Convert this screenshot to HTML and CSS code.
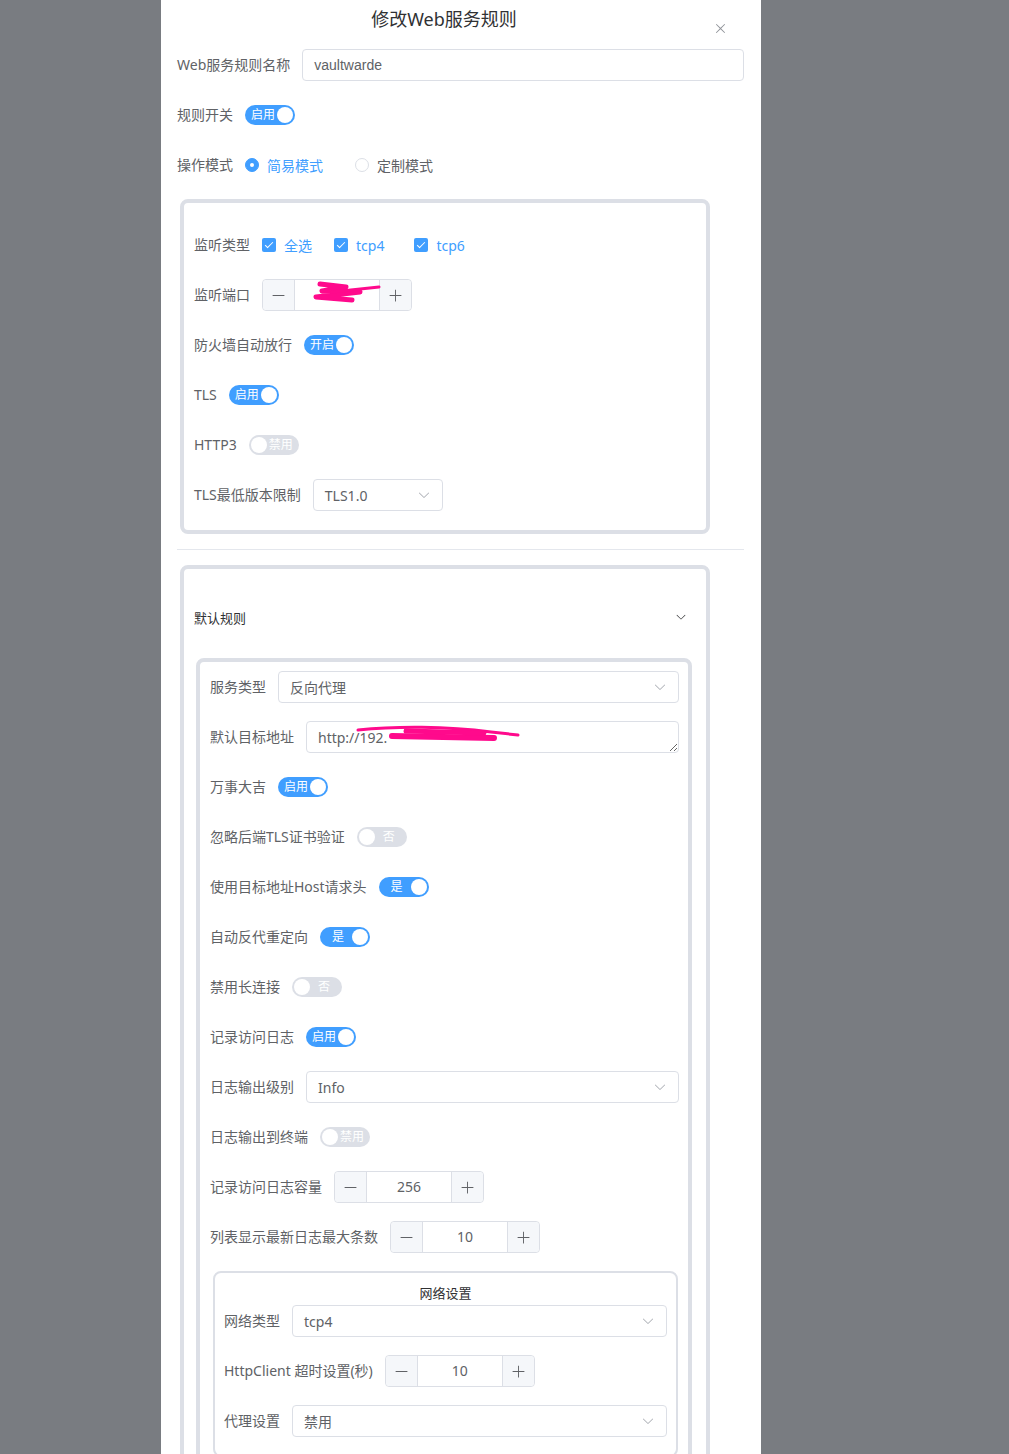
FILE: index.html
```html
<!DOCTYPE html>
<html lang="zh-CN">
<head>
<meta charset="utf-8">
<title>修改Web服务规则</title>
<link rel="stylesheet" href="styles.css">
</head>
<body>
<div class="dialog">
  <div class="dlg-header">
    <span class="dlg-title">修改Web服务规则</span>
    <span class="dlg-close"><svg viewBox="0 0 1024 1024" width="15" height="15"><path fill="currentColor" d="M764.288 214.592 512 466.88 259.712 214.592a31.936 31.936 0 0 0-45.12 45.12L466.752 512 214.528 764.224a31.936 31.936 0 1 0 45.12 45.184L512 557.184l252.288 252.288a31.936 31.936 0 0 0 45.12-45.12L557.12 512.064l252.288-252.352a31.936 31.936 0 1 0-45.12-45.184z"/></svg></span>
  </div>
  <div class="dlg-body">
    <div class="item">
      <span class="lbl">Web服务规则名称</span>
      <div class="ctl"><div class="input"><span class="input-text">vaultwarde</span></div></div>
    </div>
    <div class="item">
      <span class="lbl">规则开关</span>
      <div class="ctl"><span class="sw on"><span class="sw-text">启用</span><span class="sw-dot"></span></span></div>
    </div>
    <div class="item">
      <span class="lbl">操作模式</span>
      <div class="ctl">
        <span class="radio checked"><span class="radio-dot"></span><span class="radio-lbl">简易模式</span></span>
        <span class="radio"><span class="radio-dot"></span><span class="radio-lbl">定制模式</span></span>
      </div>
    </div>

    <div class="group">
      <div class="item">
        <span class="lbl">监听类型</span>
        <div class="ctl">
          <span class="cb cb-first"><span class="cb-box"></span><span class="cb-lbl">全选</span></span>
          <span class="cb"><span class="cb-box"></span><span class="cb-lbl">tcp4</span></span>
          <span class="cb"><span class="cb-box"></span><span class="cb-lbl">tcp6</span></span>
        </div>
      </div>
      <div class="item">
        <span class="lbl">监听端口</span>
        <div class="ctl">
          <div class="num">
            <span class="num-btn dec"><svg viewBox="0 0 1024 1024" width="15" height="15"><path fill="currentColor" d="M128 544h768a32 32 0 1 0 0-64H128a32 32 0 0 0 0 64z"/></svg></span>
            <span class="num-val"></span>
            <span class="num-btn inc"><svg viewBox="0 0 1024 1024" width="15" height="15"><path fill="currentColor" d="M480 480V128a32 32 0 0 1 64 0v352h352a32 32 0 1 1 0 64H544v352a32 32 0 1 1-64 0V544H128a32 32 0 0 1 0-64h352z"/></svg></span>
            <svg class="scribble" width="150" height="32" viewBox="0 0 150 32"><path d="M58 5 L84 8 L60 12 L98 13 L54 18 L90 21" fill="none" stroke="#ff0a8c" stroke-width="5" stroke-linecap="round" stroke-linejoin="round"/><path d="M70 13 L117 8" fill="none" stroke="#ff0a8c" stroke-width="3" stroke-linecap="round"/></svg>
          </div>
        </div>
      </div>
      <div class="item">
        <span class="lbl">防火墙自动放行</span>
        <div class="ctl"><span class="sw on"><span class="sw-text">开启</span><span class="sw-dot"></span></span></div>
      </div>
      <div class="item">
        <span class="lbl">TLS</span>
        <div class="ctl"><span class="sw on"><span class="sw-text">启用</span><span class="sw-dot"></span></span></div>
      </div>
      <div class="item">
        <span class="lbl">HTTP3</span>
        <div class="ctl"><span class="sw off"><span class="sw-dot"></span><span class="sw-text">禁用</span></span></div>
      </div>
      <div class="item">
        <span class="lbl">TLS最低版本限制</span>
        <div class="ctl">
          <div class="select sel-small"><span class="sel-text">TLS1.0</span><svg class="sel-arrow" viewBox="0 0 1024 1024" width="14" height="14"><path fill="currentColor" d="M831.872 340.864 512 652.672 192.128 340.864a30.592 30.592 0 0 0-42.752 0 29.12 29.12 0 0 0 0 41.6L489.664 714.24a32 32 0 0 0 44.672 0l340.288-331.712a29.12 29.12 0 0 0 0-41.728 30.592 30.592 0 0 0-42.752 0z"/></svg></div>
        </div>
      </div>
    </div>

    <div class="divider"></div>

    <div class="group group2">
      <div class="coll-head">
        <span class="coll-title">默认规则</span>
        <svg class="coll-arrow" viewBox="0 0 1024 1024" width="12" height="12"><path fill="currentColor" d="M831.872 340.864 512 652.672 192.128 340.864a30.592 30.592 0 0 0-42.752 0 29.12 29.12 0 0 0 0 41.6L489.664 714.24a32 32 0 0 0 44.672 0l340.288-331.712a29.12 29.12 0 0 0 0-41.728 30.592 30.592 0 0 0-42.752 0z"/></svg>
      </div>
      <div class="coll-body">
        <div class="inner">
          <div class="item">
            <span class="lbl">服务类型</span>
            <div class="ctl"><div class="select"><span class="sel-text">反向代理</span><svg class="sel-arrow" viewBox="0 0 1024 1024" width="14" height="14"><path fill="currentColor" d="M831.872 340.864 512 652.672 192.128 340.864a30.592 30.592 0 0 0-42.752 0 29.12 29.12 0 0 0 0 41.6L489.664 714.24a32 32 0 0 0 44.672 0l340.288-331.712a29.12 29.12 0 0 0 0-41.728 30.592 30.592 0 0 0-42.752 0z"/></svg></div></div>
          </div>
          <div class="item">
            <span class="lbl">默认目标地址</span>
            <div class="ctl">
              <div class="ta-wrap">
                <textarea class="ta" rows="1" readonly>http://192.</textarea>
                <svg class="scribble" width="373" height="32" viewBox="0 0 373 32"><path d="M52 9 C90 5 140 5 185 11 L212 14" fill="none" stroke="#ff0a8c" stroke-width="3" stroke-linecap="round"/><path d="M86 15 L188 17" fill="none" stroke="#ff0a8c" stroke-width="6" stroke-linecap="round"/><path d="M100 10 L178 12" fill="none" stroke="#ff0a8c" stroke-width="5" stroke-linecap="round"/></svg>
              </div>
            </div>
          </div>
          <div class="item">
            <span class="lbl">万事大吉</span>
            <div class="ctl"><span class="sw on"><span class="sw-text">启用</span><span class="sw-dot"></span></span></div>
          </div>
          <div class="item">
            <span class="lbl">忽略后端TLS证书验证</span>
            <div class="ctl"><span class="sw off"><span class="sw-dot"></span><span class="sw-text">否</span></span></div>
          </div>
          <div class="item">
            <span class="lbl">使用目标地址Host请求头</span>
            <div class="ctl"><span class="sw on"><span class="sw-text">是</span><span class="sw-dot"></span></span></div>
          </div>
          <div class="item">
            <span class="lbl">自动反代重定向</span>
            <div class="ctl"><span class="sw on"><span class="sw-text">是</span><span class="sw-dot"></span></span></div>
          </div>
          <div class="item">
            <span class="lbl">禁用长连接</span>
            <div class="ctl"><span class="sw off"><span class="sw-dot"></span><span class="sw-text">否</span></span></div>
          </div>
          <div class="item">
            <span class="lbl">记录访问日志</span>
            <div class="ctl"><span class="sw on"><span class="sw-text">启用</span><span class="sw-dot"></span></span></div>
          </div>
          <div class="item">
            <span class="lbl">日志输出级别</span>
            <div class="ctl"><div class="select"><span class="sel-text">Info</span><svg class="sel-arrow" viewBox="0 0 1024 1024" width="14" height="14"><path fill="currentColor" d="M831.872 340.864 512 652.672 192.128 340.864a30.592 30.592 0 0 0-42.752 0 29.12 29.12 0 0 0 0 41.6L489.664 714.24a32 32 0 0 0 44.672 0l340.288-331.712a29.12 29.12 0 0 0 0-41.728 30.592 30.592 0 0 0-42.752 0z"/></svg></div></div>
          </div>
          <div class="item">
            <span class="lbl">日志输出到终端</span>
            <div class="ctl"><span class="sw off"><span class="sw-dot"></span><span class="sw-text">禁用</span></span></div>
          </div>
          <div class="item">
            <span class="lbl">记录访问日志容量</span>
            <div class="ctl">
              <div class="num">
                <span class="num-btn dec"><svg viewBox="0 0 1024 1024" width="15" height="15"><path fill="currentColor" d="M128 544h768a32 32 0 1 0 0-64H128a32 32 0 0 0 0 64z"/></svg></span>
                <span class="num-val">256</span>
                <span class="num-btn inc"><svg viewBox="0 0 1024 1024" width="15" height="15"><path fill="currentColor" d="M480 480V128a32 32 0 0 1 64 0v352h352a32 32 0 1 1 0 64H544v352a32 32 0 1 1-64 0V544H128a32 32 0 0 1 0-64h352z"/></svg></span>
              </div>
            </div>
          </div>
          <div class="item">
            <span class="lbl">列表显示最新日志最大条数</span>
            <div class="ctl">
              <div class="num">
                <span class="num-btn dec"><svg viewBox="0 0 1024 1024" width="15" height="15"><path fill="currentColor" d="M128 544h768a32 32 0 1 0 0-64H128a32 32 0 0 0 0 64z"/></svg></span>
                <span class="num-val">10</span>
                <span class="num-btn inc"><svg viewBox="0 0 1024 1024" width="15" height="15"><path fill="currentColor" d="M480 480V128a32 32 0 0 1 64 0v352h352a32 32 0 1 1 0 64H544v352a32 32 0 1 1-64 0V544H128a32 32 0 0 1 0-64h352z"/></svg></span>
              </div>
            </div>
          </div>

          <div class="netbox">
            <div class="net-title">网络设置</div>
            <div class="item">
              <span class="lbl">网络类型</span>
              <div class="ctl"><div class="select"><span class="sel-text">tcp4</span><svg class="sel-arrow" viewBox="0 0 1024 1024" width="14" height="14"><path fill="currentColor" d="M831.872 340.864 512 652.672 192.128 340.864a30.592 30.592 0 0 0-42.752 0 29.12 29.12 0 0 0 0 41.6L489.664 714.24a32 32 0 0 0 44.672 0l340.288-331.712a29.12 29.12 0 0 0 0-41.728 30.592 30.592 0 0 0-42.752 0z"/></svg></div></div>
            </div>
            <div class="item">
              <span class="lbl">HttpClient 超时设置(秒)</span>
              <div class="ctl">
                <div class="num">
                  <span class="num-btn dec"><svg viewBox="0 0 1024 1024" width="15" height="15"><path fill="currentColor" d="M128 544h768a32 32 0 1 0 0-64H128a32 32 0 0 0 0 64z"/></svg></span>
                  <span class="num-val">10</span>
                  <span class="num-btn inc"><svg viewBox="0 0 1024 1024" width="15" height="15"><path fill="currentColor" d="M480 480V128a32 32 0 0 1 64 0v352h352a32 32 0 1 1 0 64H544v352a32 32 0 1 1-64 0V544H128a32 32 0 0 1 0-64h352z"/></svg></span>
                </div>
              </div>
            </div>
            <div class="item">
              <span class="lbl">代理设置</span>
              <div class="ctl"><div class="select"><span class="sel-text">禁用</span><svg class="sel-arrow" viewBox="0 0 1024 1024" width="14" height="14"><path fill="currentColor" d="M831.872 340.864 512 652.672 192.128 340.864a30.592 30.592 0 0 0-42.752 0 29.12 29.12 0 0 0 0 41.6L489.664 714.24a32 32 0 0 0 44.672 0l340.288-331.712a29.12 29.12 0 0 0 0-41.728 30.592 30.592 0 0 0-42.752 0z"/></svg></div></div>
            </div>
          </div>
        </div>
      </div>
    </div>
  </div>
</div>
</body>
</html>
```
FILE: styles.css
```css
* { box-sizing: border-box; }
html, body { margin: 0; padding: 0; }
body {
  background: #797c81;
  font-family: "Noto Sans", "Noto Sans CJK SC", sans-serif;
  font-size: 14px;
  color: #606266;
  height: 1454px;
  overflow: hidden;
}
.dialog {
  position: relative;
  margin-left: 161px;
  width: 600px;
  min-height: 1454px;
  background: #fff;
  padding-bottom: 40px;
}
.dlg-header {
  height: 31px;
  padding: 7px 50px 0 16px;
}
.dlg-title {
  display: block;
  text-align: center;
  font-size: 18px;
  line-height: 24px;
  color: #303133;
}
.dlg-close {
  position: absolute;
  left: 552px;
  top: 21px;
  width: 15px;
  height: 15px;
  color: #909399;
  display: flex;
}
.dlg-body {
  padding: 18px 17px 0 16px;
}
.item {
  display: flex;
  align-items: center;
  min-height: 32px;
  margin-bottom: 18px;
}
.lbl {
  flex: none;
  padding-right: 12px;
  line-height: 32px;
  white-space: nowrap;
  color: #606266;
  font-size: 14px;
}
.ctl {
  flex: 1;
  min-width: 0;
  display: flex;
  align-items: center;
  min-height: 32px;
}
.input {
  flex: 1;
  height: 32px;
  border: 1px solid #dcdfe6;
  border-radius: 4px;
  padding: 0 11px;
  display: flex;
  align-items: center;
}
.input-text {
  font-family: "Liberation Sans", "Noto Sans CJK SC", sans-serif;
  color: #606266;
}

/* switch */
.sw {
  position: relative;
  display: inline-flex;
  align-items: center;
  width: 50px;
  height: 20px;
  border-radius: 10px;
  color: #fff;
  font-size: 12px;
}
.sw.on { background: #409eff; padding: 0 20px 0 6px; }
.sw.off { background: #dcdfe6; padding: 0 6px 0 20px; }
.sw-text { flex: 1; text-align: center; line-height: 20px; white-space: nowrap; }
.sw-dot {
  position: absolute;
  top: 2px;
  width: 16px;
  height: 16px;
  border-radius: 50%;
  background: #fff;
}
.sw.on .sw-dot { right: 2px; }
.sw.off .sw-dot { left: 2px; }

/* radio */
.radio {
  display: inline-flex;
  align-items: center;
  margin-right: 32px;
}
.radio-dot {
  width: 14px;
  height: 14px;
  border-radius: 50%;
  border: 1px solid #dcdfe6;
  background: #fff;
  position: relative;
}
.radio.checked .radio-dot { background: #409eff; border-color: #409eff; }
.radio.checked .radio-dot::after {
  content: "";
  position: absolute;
  left: 4px;
  top: 4px;
  width: 4px;
  height: 4px;
  border-radius: 50%;
  background: #fff;
}
.radio-lbl { padding-left: 8px; color: #606266; }
.radio.checked .radio-lbl { color: #409eff; }

/* checkbox */
.cb {
  display: inline-flex;
  align-items: center;
  margin-right: 30px;
}
.cb-first { margin-right: 22px; }
.cb-box {
  position: relative;
  width: 14px;
  height: 14px;
  border-radius: 2px;
  background: #409eff;
}
.cb-box::after {
  content: "";
  position: absolute;
  left: 5px;
  top: 2px;
  width: 3px;
  height: 7px;
  border: 1px solid #fff;
  border-left: 0;
  border-top: 0;
  transform: rotate(45deg);
  transform-origin: center;
}
.cb-lbl { padding-left: 8px; color: #409eff; }

/* input number */
.num {
  position: relative;
  width: 150px;
  height: 32px;
  border: 1px solid #dcdfe6;
  border-radius: 4px;
  display: flex;
}
.num-btn {
  width: 32px;
  background: #f5f7fa;
  color: #606266;
  display: flex;
  align-items: center;
  justify-content: center;
}
.num-btn.dec { border-right: 1px solid #dcdfe6; border-radius: 4px 0 0 4px; }
.num-btn.inc { border-left: 1px solid #dcdfe6; border-radius: 0 4px 4px 0; }
.num-val {
  flex: 1;
  text-align: center;
  line-height: 30px;
  color: #606266;
}
.scribble {
  position: absolute;
  left: 0;
  top: 0;
  pointer-events: none;
}
.num .scribble { left: -1px; top: -1px; }

/* select */
.select {
  flex: 1;
  height: 32px;
  border: 1px solid #dcdfe6;
  border-radius: 4px;
  padding: 0 11px;
  display: flex;
  align-items: center;
}
.sel-small { flex: none; width: 130px; }
.sel-text { flex: 1; color: #606266; white-space: nowrap; }
.sel-arrow { color: #a8abb2; flex: none; }

/* textarea */
.ta-wrap {
  position: relative;
  flex: 1;
  display: flex;
}
.ta {
  display: block;
  width: 100%;
  height: 32px;
  border: 1px solid #dcdfe6;
  border-radius: 4px;
  padding: 5px 11px;
  font-family: "Noto Sans", "Noto Sans CJK SC", sans-serif;
  font-size: 14px;
  line-height: 1.5;
  color: #606266;
  resize: vertical;
  overflow: hidden;
  outline: none;
  background: #fff;
}

/* groups */
.group {
  margin-left: 3px;
  width: 530px;
  border: 4px solid #dcdfe6;
  border-radius: 8px;
  padding: 26px 10px 1px 10px;
}
.group2 {
  padding: 24px 10px 0 10px;
}
.divider {
  height: 1px;
  background: #e4e7ed;
  margin: 15px 0;
}
.coll-head {
  height: 48px;
  display: flex;
  align-items: center;
  color: #303133;
  font-size: 13px;
}
.coll-title { flex: 1; }
.coll-arrow { margin-right: 9px; color: #303133; }
.coll-body { padding-top: 17px; }
.inner {
  margin: 0 4px 0 2px;
  border: 4px solid #dcdfe6;
  border-radius: 8px;
  padding: 9px 9px 0 10px;
}
.netbox {
  margin: 0 1px 0 3px;
  border: 2px solid #dcdfe6;
  border-radius: 8px;
  padding: 9px 9px 0 9px;
}
.net-title {
  text-align: center;
  font-size: 13px;
  line-height: 22px;
  color: #303133;
  margin-bottom: 1px;
}
```
